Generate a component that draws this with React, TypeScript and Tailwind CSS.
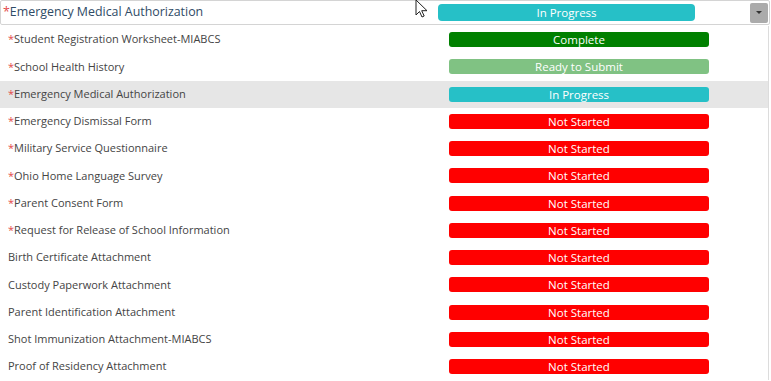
const rows = [
  { name: 'Student Registration Worksheet-MIABCS', req: true, status: 'Complete' },
  { name: 'School Health History', req: true, status: 'Ready to Submit' },
  { name: 'Emergency Medical Authorization', req: true, status: 'In Progress', active: true },
  { name: 'Emergency Dismissal Form', req: true, status: 'Not Started' },
  { name: 'Military Service Questionnaire', req: true, status: 'Not Started' },
  { name: 'Ohio Home Language Survey', req: true, status: 'Not Started' },
  { name: 'Parent Consent Form', req: true, status: 'Not Started' },
  { name: 'Request for Release of School Information', req: true, status: 'Not Started' },
  { name: 'Birth Certificate Attachment', req: false, status: 'Not Started' },
  { name: 'Custody Paperwork Attachment', req: false, status: 'Not Started' },
  { name: 'Parent Identification Attachment', req: false, status: 'Not Started' },
  { name: 'Shot Immunization Attachment-MIABCS', req: false, status: 'Not Started' },
  { name: 'Proof of Residency Attachment', req: false, status: 'Not Started' },
]

const badgeColor: Record<string, string> = {
  'Complete': 'bg-[#008000]',
  'Ready to Submit': 'bg-[#80c283]',
  'In Progress': 'bg-[#26c0c7]',
  'Not Started': 'bg-[#ff0000]',
}

export default function App() {
  return (
    <div className="relative w-[771px] h-[381px] bg-white overflow-hidden text-[#444]" style={{ fontFamily: '"Open Sans", sans-serif' }}>
      {/* selected value */}
      <div className="h-[25px] flex items-center border border-[#d4d4d4] rounded-[2px] mr-[1px]">
        <span className="pl-[2px] text-[12.4px] text-[#2f4b66] w-[437px] whitespace-nowrap">
          <span className="text-[#e34949]">*</span>Emergency Medical Authorization
        </span>
        <div className="w-[257px] h-[17px] -mt-[1px] rounded-[4px] bg-[#26c0c7] text-white text-[11.5px] leading-[17px] text-center">In Progress</div>
        <div className="flex-1" />
        <div className="w-[18px] h-[20px] bg-[#ababab] rounded-[2px] mr-[1px] flex items-center justify-center">
          <svg width="6" height="4" viewBox="0 0 6 4"><path d="M0 0h6L3 3z" fill="#333" /></svg>
        </div>
      </div>

      {/* list */}
      <div className="mt-[1px] mr-[2px] border-r border-[#dcdcdc]">
        {rows.map((r) => (
          <div key={r.name} className={`h-[27.25px] flex items-center ${r.active ? 'bg-[#e6e6e6]' : ''}`}>
            <span className="pl-[8px] w-[449px] text-[11px] whitespace-nowrap">
              {r.req && <span className="text-[#e34949]">*</span>}
              {r.name}
            </span>
            <div className={`w-[260px] h-[15px] rounded-[3px] text-white text-[11.5px] leading-[15px] text-center ${badgeColor[r.status]}`}>
              {r.status}
            </div>
          </div>
        ))}
      </div>

      {/* mouse cursor */}
      <svg className="absolute left-[415px] top-[-1px]" width="14" height="19" viewBox="0 0 14 19">
        <path d="M1 1v15l3.5-3.5 2.5 5.5 2.2-1-2.5-5.3H12z" fill="#fff" stroke="#222" strokeWidth="1" strokeLinejoin="round" />
      </svg>
    </div>
  )
}
